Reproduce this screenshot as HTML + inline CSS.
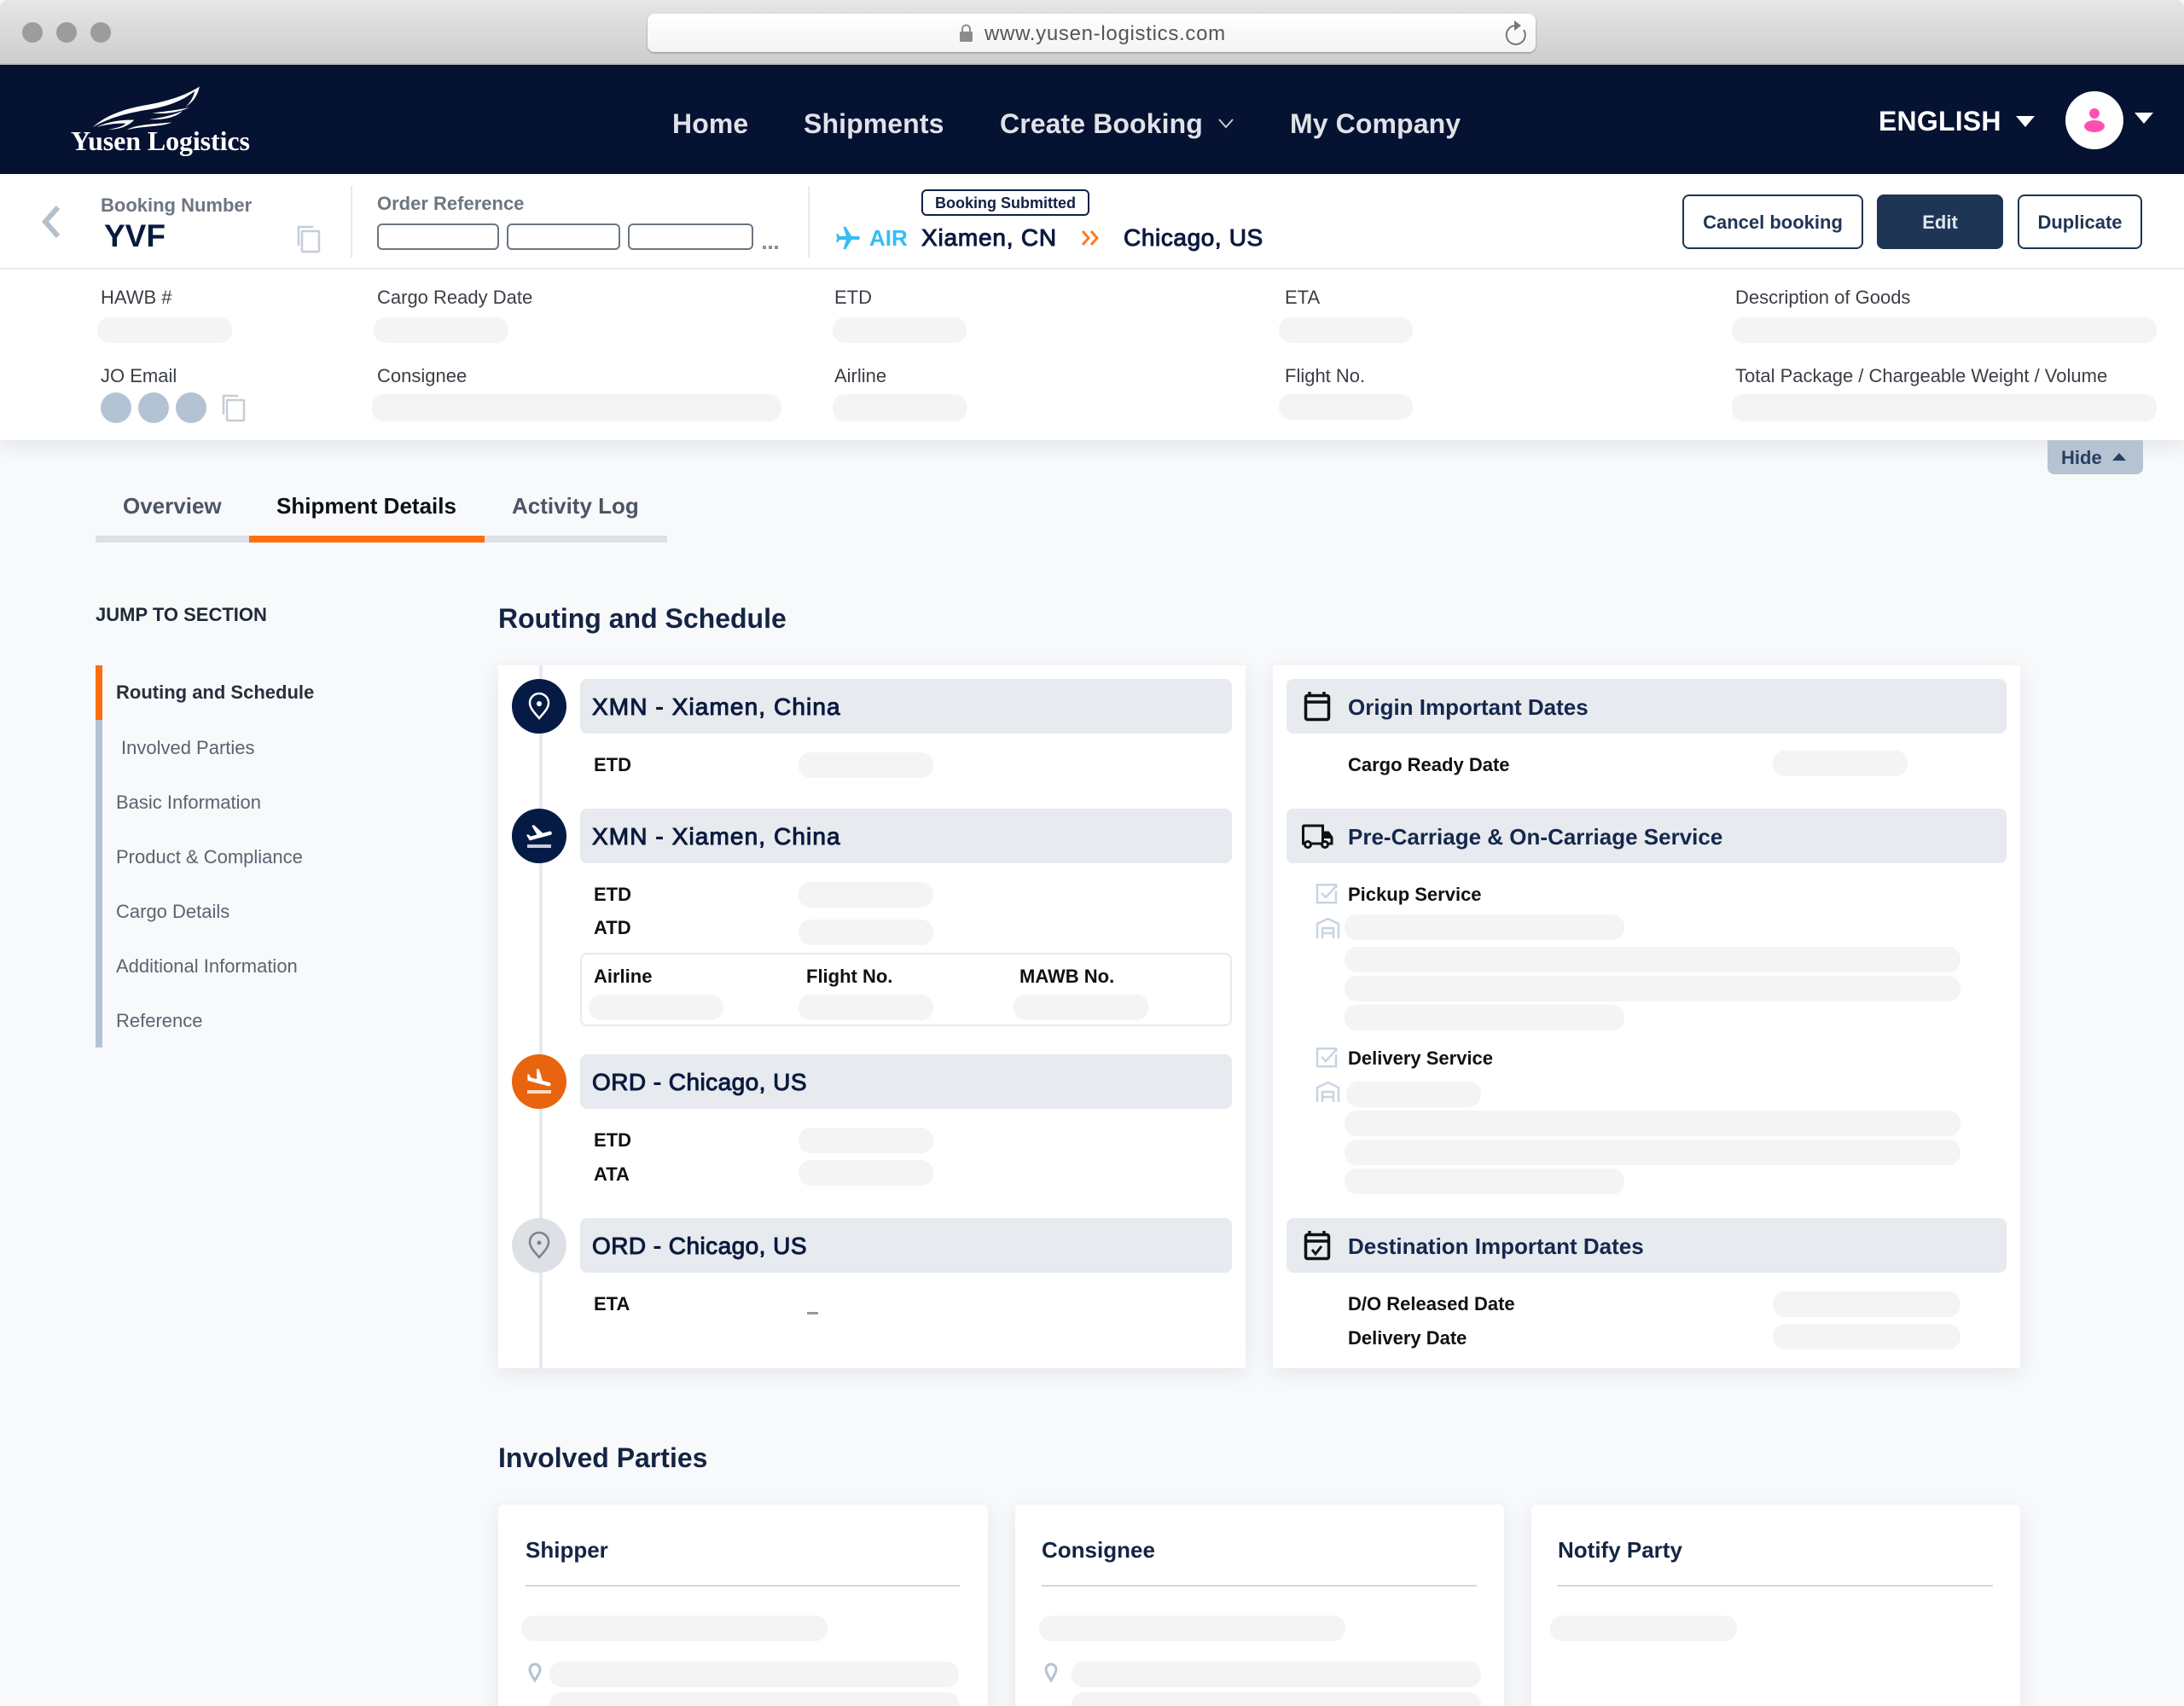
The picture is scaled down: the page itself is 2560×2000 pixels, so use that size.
<!DOCTYPE html>
<html lang="en"><head><meta charset="utf-8"><title>Yusen Logistics - Shipment Details</title>
<style>
html,body{margin:0;padding:0;width:2560px;height:2000px;overflow:hidden;background:#f7f9fb}
#p{position:relative;width:2560px;height:2000px;overflow:hidden;background:#f7f9fb;font-family:"Liberation Sans",Arial,sans-serif}
.a{position:absolute;box-sizing:border-box}
.t{position:absolute;white-space:nowrap;line-height:0;font-size:22px}
.b{font-weight:700}
.s{position:absolute;background:#f4f4f4;border-radius:14px;height:30px}
.h{position:absolute;background:#e7eaee;border-radius:8px;height:64px}
.ht{position:absolute;white-space:nowrap;line-height:0;font-size:28px;font-weight:400;-webkit-text-stroke:1px #0a1a3f;color:#0a1a3f;left:694px}
.md{font-weight:400;-webkit-text-stroke:1px #0a1a3f}
.rt{position:absolute;white-space:nowrap;line-height:0;font-size:26px;font-weight:700;color:#14284e;left:1580px}
.l{position:absolute;white-space:nowrap;line-height:0;font-size:22px;font-weight:700;color:#111}
.g{position:absolute;white-space:nowrap;line-height:0;font-size:22px;color:#3a3f45}
.n{position:absolute;white-space:nowrap;line-height:0;font-size:32px;font-weight:700;letter-spacing:.1px;color:#dfe3e8;top:145px}
.btn{position:absolute;top:228px;height:64px;border:2px solid #1e3553;border-radius:8px;background:#fff;color:#1e3553;font-size:22px;font-weight:700;line-height:61px;text-align:center;box-sizing:border-box}
.m{position:absolute;white-space:nowrap;line-height:0;font-size:22px;color:#5a6470;left:136px}
.card{position:absolute;background:#fff;box-shadow:0 6px 24px rgba(30,45,70,.09)}
.box{position:absolute;top:262px;height:31px;border:2px solid #6b7680;border-radius:6px;box-sizing:border-box;background:#fff}
</style></head>
<body>
<div id="p">
<!-- browser chrome -->
<div class="a" style="left:0;top:0;width:2560px;height:76px;background:linear-gradient(#e6e6e6,#cdcdcc);border-bottom:2px solid #b9b9b9;border-radius:8px 8px 0 0"></div>
<div class="a" style="left:759px;top:16px;width:1041px;height:45px;background:linear-gradient(#fff,#f4f4f4);border-radius:8px;box-shadow:0 1px 2px rgba(0,0,0,.35)"></div>
<div class="t" style="left:1154px;top:40px;font-size:24px;letter-spacing:.7px;color:#555">www.yusen-logistics.com</div>

<!-- nav -->
<div class="a" style="left:0;top:76px;width:2560px;height:128px;background:#051231"></div>
<div class="t" style="left:83px;top:165px;font-family:'Liberation Serif',serif;font-weight:700;font-size:32px;letter-spacing:-.1px;color:#fff">Yusen Logistics</div>
<div class="n" style="left:788px">Home</div>
<div class="n" style="left:942px">Shipments</div>
<div class="n" style="left:1172px">Create Booking</div>
<div class="n" style="left:1512px">My Company</div>
<div class="t b" style="left:2202px;top:142px;font-size:32px;letter-spacing:.2px;color:#fff">ENGLISH</div>

<!-- sub header -->
<div class="a" style="left:0;top:204px;width:2560px;height:312px;background:#fff;box-shadow:0 6px 22px rgba(30,45,70,.1)"></div>
<div class="a" style="left:0;top:314px;width:2560px;height:2px;background:#e9ecef"></div>
<div class="t b" style="left:118px;top:241px;color:#6d7680">Booking Number</div>
<div class="t b" style="left:122px;top:277px;font-size:37px;color:#0a1a3f">YVF</div>
<div class="a" style="left:411px;top:218px;width:2px;height:84px;background:#e8eaed"></div>
<div class="a" style="left:947px;top:218px;width:2px;height:84px;background:#e8eaed"></div>
<div class="t b" style="left:442px;top:239px;color:#6d7680">Order Reference</div>
<div class="box" style="left:442px;width:143px"></div>
<div class="box" style="left:594px;width:133px"></div>
<div class="box" style="left:736px;width:147px"></div>
<div class="a" style="left:1080px;top:222px;width:197px;height:31px;border:2px solid #0f2145;border-radius:6px"></div>
<div class="t b" style="left:1096px;top:238px;font-size:18px;color:#0f2145">Booking Submitted</div>
<div class="t b" style="left:1019px;top:279px;font-size:26px;color:#35bdf2">AIR</div>
<div class="t md" style="left:1080px;top:279px;font-size:28px;letter-spacing:.8px;color:#0a1a3f">Xiamen, CN</div>
<div class="t md" style="left:1317px;top:279px;font-size:28px;letter-spacing:.6px;color:#0a1a3f">Chicago, US</div>
<div class="btn" style="left:1972px;width:212px">Cancel booking</div>
<div class="btn" style="left:2200px;width:148px;background:#1f3555;border-color:#1f3555;color:#dfe5ee">Edit</div>
<div class="btn" style="left:2365px;width:146px">Duplicate</div>

<!-- details -->
<div class="g" style="left:118px;top:349px">HAWB #</div>
<div class="g" style="left:442px;top:349px">Cargo Ready Date</div>
<div class="g" style="left:978px;top:349px">ETD</div>
<div class="g" style="left:1506px;top:349px">ETA</div>
<div class="g" style="left:2034px;top:349px">Description of Goods</div>
<div class="s" style="left:114px;top:372px;width:158px"></div>
<div class="s" style="left:438px;top:372px;width:158px"></div>
<div class="s" style="left:976px;top:372px;width:157px"></div>
<div class="s" style="left:1499px;top:372px;width:157px"></div>
<div class="s" style="left:2030px;top:372px;width:498px"></div>
<div class="g" style="left:118px;top:441px">JO Email</div>
<div class="g" style="left:442px;top:441px">Consignee</div>
<div class="g" style="left:978px;top:441px">Airline</div>
<div class="g" style="left:1506px;top:441px">Flight No.</div>
<div class="g" style="left:2034px;top:441px">Total Package / Chargeable Weight / Volume</div>
<div class="s" style="left:436px;top:462px;width:480px;height:32px"></div>
<div class="s" style="left:976px;top:462px;width:157px;height:32px"></div>
<div class="s" style="left:1499px;top:462px;width:157px"></div>
<div class="s" style="left:2030px;top:462px;width:498px;height:32px"></div>
<div class="a" style="left:2400px;top:516px;width:112px;height:40px;background:#b5c3d2;border-radius:0 0 8px 8px"></div>
<div class="t b" style="left:2416px;top:537px;color:#27405f">Hide</div>

<!-- tabs -->
<div class="t b" style="left:144px;top:593px;font-size:26px;color:#4b5563">Overview</div>
<div class="t b" style="left:324px;top:593px;font-size:26px;color:#0c0f14">Shipment Details</div>
<div class="t b" style="left:600px;top:593px;font-size:26px;color:#4b5563">Activity Log</div>
<div class="a" style="left:112px;top:628px;width:670px;height:8px;background:#dde0e4"></div>
<div class="a" style="left:292px;top:628px;width:276px;height:8px;background:#ff6d10"></div>

<!-- sidebar -->
<div class="t b" style="left:112px;top:721px;color:#1f2a37">JUMP TO SECTION</div>
<div class="a" style="left:112px;top:780px;width:8px;height:448px;background:#b3c3d3"></div>
<div class="a" style="left:112px;top:780px;width:8px;height:64px;background:#ff6d10"></div>
<div class="m b" style="top:812px;color:#27303b">Routing and Schedule</div>
<div class="m" style="left:142px;top:877px">Involved Parties</div>
<div class="m" style="top:941px">Basic Information</div>
<div class="m" style="top:1005px">Product &amp; Compliance</div>
<div class="m" style="top:1069px">Cargo Details</div>
<div class="m" style="top:1133px">Additional Information</div>
<div class="m" style="top:1197px">Reference</div>

<div class="t b" style="left:584px;top:725px;font-size:32px;color:#142543">Routing and Schedule</div>

<!-- left card -->
<div class="card" style="left:584px;top:780px;width:876px;height:824px"></div>
<div class="a" style="left:632px;top:780px;width:4px;height:824px;background:#e6e9ee"></div>
<div class="h" style="left:680px;top:796px;width:764px"></div>
<div class="h" style="left:680px;top:948px;width:764px"></div>
<div class="h" style="left:680px;top:1236px;width:764px"></div>
<div class="h" style="left:680px;top:1428px;width:764px"></div>
<div class="ht" style="top:829px;letter-spacing:1.1px">XMN - Xiamen, China</div>
<div class="ht" style="top:981px;letter-spacing:1.1px">XMN - Xiamen, China</div>
<div class="ht" style="top:1269px;letter-spacing:.45px">ORD - Chicago, US</div>
<div class="ht" style="top:1461px;letter-spacing:.45px">ORD - Chicago, US</div>
<div class="l" style="left:696px;top:897px">ETD</div>
<div class="s" style="left:936px;top:882px;width:158px"></div>
<div class="l" style="left:696px;top:1049px">ETD</div>
<div class="s" style="left:936px;top:1034px;width:158px"></div>
<div class="l" style="left:696px;top:1088px">ATD</div>
<div class="s" style="left:936px;top:1078px;width:158px"></div>
<div class="a" style="left:680px;top:1117px;width:764px;height:86px;border:2px solid #e8eaed;border-radius:8px"></div>
<div class="l" style="left:696px;top:1145px">Airline</div>
<div class="l" style="left:945px;top:1145px">Flight No.</div>
<div class="l" style="left:1195px;top:1145px">MAWB No.</div>
<div class="s" style="left:690px;top:1166px;width:158px"></div>
<div class="s" style="left:936px;top:1166px;width:158px"></div>
<div class="s" style="left:1188px;top:1166px;width:158px"></div>
<div class="l" style="left:696px;top:1337px">ETD</div>
<div class="s" style="left:936px;top:1322px;width:158px"></div>
<div class="l" style="left:696px;top:1377px">ATA</div>
<div class="s" style="left:936px;top:1360px;width:158px"></div>
<div class="l" style="left:696px;top:1529px">ETA</div>
<div class="a" style="left:946px;top:1538px;width:13px;height:3px;background:#999"></div>

<!-- right card -->
<div class="card" style="left:1492px;top:780px;width:876px;height:824px"></div>
<div class="h" style="left:1508px;top:796px;width:844px"></div>
<div class="h" style="left:1508px;top:948px;width:844px"></div>
<div class="h" style="left:1508px;top:1428px;width:844px"></div>
<div class="rt" style="top:829px">Origin Important Dates</div>
<div class="rt" style="top:981px">Pre-Carriage &amp; On-Carriage Service</div>
<div class="rt" style="top:1461px">Destination Important Dates</div>
<div class="l" style="left:1580px;top:897px">Cargo Ready Date</div>
<div class="s" style="left:2078px;top:880px;width:158px"></div>
<div class="l" style="left:1580px;top:1049px">Pickup Service</div>
<div class="s" style="left:1576px;top:1072px;width:328px"></div>
<div class="s" style="left:1576px;top:1110px;width:722px"></div>
<div class="s" style="left:1576px;top:1144px;width:722px"></div>
<div class="s" style="left:1576px;top:1178px;width:328px"></div>
<div class="l" style="left:1580px;top:1241px">Delivery Service</div>
<div class="s" style="left:1578px;top:1268px;width:158px"></div>
<div class="s" style="left:1576px;top:1302px;width:722px"></div>
<div class="s" style="left:1576px;top:1336px;width:722px"></div>
<div class="s" style="left:1576px;top:1370px;width:328px"></div>
<div class="l" style="left:1580px;top:1529px">D/O Released Date</div>
<div class="s" style="left:2078px;top:1514px;width:220px"></div>
<div class="l" style="left:1580px;top:1569px">Delivery Date</div>
<div class="s" style="left:2078px;top:1552px;width:220px"></div>

<!-- involved parties -->
<div class="t b" style="left:584px;top:1709px;font-size:32px;color:#142543">Involved Parties</div>
<div class="card" style="left:584px;top:1764px;width:574px;height:260px;border-radius:6px"></div>
<div class="card" style="left:1190px;top:1764px;width:573px;height:260px;border-radius:6px"></div>
<div class="card" style="left:1795px;top:1764px;width:573px;height:260px;border-radius:6px"></div>
<div class="t b" style="left:616px;top:1817px;font-size:26px;color:#142543">Shipper</div>
<div class="t b" style="left:1221px;top:1817px;font-size:26px;color:#142543">Consignee</div>
<div class="t b" style="left:1826px;top:1817px;font-size:26px;color:#142543">Notify Party</div>
<div class="a" style="left:616px;top:1858px;width:509px;height:2px;background:#d0d5da"></div>
<div class="a" style="left:1221px;top:1858px;width:510px;height:2px;background:#d0d5da"></div>
<div class="a" style="left:1826px;top:1858px;width:510px;height:2px;background:#d0d5da"></div>
<div class="s" style="left:611px;top:1894px;width:359px"></div>
<div class="s" style="left:1218px;top:1894px;width:359px"></div>
<div class="s" style="left:1817px;top:1894px;width:219px"></div>
<div class="s" style="left:644px;top:1948px;width:480px"></div>
<div class="s" style="left:644px;top:1984px;width:480px"></div>
<div class="s" style="left:1256px;top:1948px;width:480px"></div>
<div class="s" style="left:1256px;top:1984px;width:480px"></div>

<!-- all icons drawn in page coordinates -->
<svg class="a" style="left:0;top:0" width="2560" height="2000" viewBox="0 0 2560 2000" fill="none">
  <!-- window dots -->
  <circle cx="38" cy="38" r="12" fill="#9c9c9c"/><circle cx="78" cy="38" r="12" fill="#9c9c9c"/><circle cx="118" cy="38" r="12" fill="#9c9c9c"/>
  <!-- lock -->
  <rect x="1125" y="37" width="15" height="12" rx="1.5" fill="#8c8c8c"/>
  <path d="M1128 38v-4a4.500 4.500 0 0 1 9 0v4" stroke="#8c8c8c" stroke-width="2"/>
  <!-- reload -->
  <path d="M1776 30A11 11 0 1 0 1786 35" stroke="#777" stroke-width="2"/>
  <path d="M1775 24l8 6-8 6z" fill="#777"/>
  <!-- logo wing -->
  <g transform="translate(60 90) scale(.3333)" fill="#fff">
    <path d="M522 34C470 68 400 88 330 100C250 114 190 138 145 178C195 148 262 128 340 116C420 102 480 78 522 34Z"/>
    <path d="M522 34C515 62 505 85 470 108C490 92 500 70 505 50Z"/>
    <path d="M487 108C445 126 400 132 355 128C395 122 440 118 487 108Z"/>
    <path d="M462 120C440 142 400 152 345 150C390 144 430 134 462 120Z"/>
    <path d="M424 160C390 177 320 172 266 187C300 166 370 166 424 160Z"/>
    <path d="M292 152C240 150 195 160 160 177C200 166 245 162 262 165C250 176 225 182 200 185C235 187 270 175 292 152Z"/>
  </g>
  <!-- nav chevron & triangles -->
  <path d="M1429 140l8 9 8-9" stroke="#c7ccd3" stroke-width="2"/>
  <path d="M2363 136h22l-11 13z" fill="#fff"/>
  <circle cx="2455" cy="141" r="34" fill="#fff"/>
  <ellipse cx="2455" cy="133" rx="6" ry="6" fill="#ff4fb0"/>
  <ellipse cx="2455" cy="148" rx="12" ry="7" fill="#ff4fb0"/>
  <path d="M2502 132h22l-11 13z" fill="#fff"/>
  <!-- back -->
  <path d="M68 243L53 260l15 17" stroke="#b3bfca" stroke-width="6"/>
  <!-- copy icons -->
  <g stroke="#c5cdd6" stroke-width="2.500">
    <path d="M350 288v-22h17"/><rect x="354" y="271" width="20" height="24" rx="1"/>
    <path d="M262 486v-22h17"/><rect x="266" y="469" width="20" height="24" rx="1"/>
  </g>
  <!-- order ref dots -->
  <g fill="#8a929b"><rect x="894" y="288" width="4" height="4"/><rect x="901" y="288" width="4" height="4"/><rect x="908" y="288" width="4" height="4"/></g>
  <!-- plane -->
  <path transform="translate(994 279) rotate(90) scale(1.400) translate(-11.500 -12)" d="M21 16v-2l-8-5V3.500c0-.83-.67-1.500-1.500-1.500S10 2.670 10 3.500V9l-8 5v2l8-2.500V19l-2 1.500V22l3.500-1 3.500 1v-1.500L13 19v-5.500l8 2.500z" fill="#35bdf2"/>
  <!-- route arrows -->
  <path d="M1269 271l7 8-7 8M1279 271l7 8-7 8" stroke="#ff7a1f" stroke-width="3"/>
  <!-- email dots -->
  <circle cx="136" cy="478" r="18" fill="#b3c3d3"/><circle cx="180" cy="478" r="18" fill="#b3c3d3"/><circle cx="224" cy="478" r="18" fill="#b3c3d3"/>
  <!-- hide triangle -->
  <path d="M2476 540l8-9 8 9z" fill="#27405f"/>
  <!-- timeline circles -->
  <circle cx="632" cy="828" r="32" fill="#051a44"/>
  <path d="M632 842c-6-7-11-12-11-18a11 11 0 0 1 22 0c0 6-5 11-11 18z" stroke="#fff" stroke-width="2.500"/><circle cx="632" cy="825" r="3" fill="#fff"/>
  <circle cx="632" cy="980" r="32" fill="#051a44"/>
  <path transform="translate(614.300 962) scale(1.470)" d="M22.070 9.640c-.21-.8-1.040-1.280-1.840-1.060L14.920 10 8 3.570l-1.910.51 4.140 7.170-4.970 1.330-1.970-1.540-1.450.39 1.820 3.160.77 1.330 1.600-.43 5.310-1.420 4.350-1.160L21 11.490c.81-.23 1.280-1.050 1.070-1.850z" fill="#fff"/>
  <rect x="618" y="990" width="28" height="4" fill="#c8cdd6"/>
  <circle cx="632" cy="1268" r="32" fill="#e8640f"/>
  <path transform="translate(614.300 1250) scale(1.470)" d="M9.680 13.270l4.350 1.160 5.310 1.420c.8.210 1.620-.26 1.840-1.060.21-.8-.26-1.620-1.060-1.840l-5.310-1.420-2.760-9.020L10.120 2v8.280L5.150 8.950l-.93-2.320-1.450-.39v5.170l1.600.43 5.310 1.430z" fill="#fff"/>
  <rect x="618" y="1278" width="28" height="4" fill="#ffd9c2"/>
  <circle cx="632" cy="1460" r="32" fill="#dde1e6"/>
  <path d="M632 1474c-6-7-11-12-11-18a11 11 0 0 1 22 0c0 6-5 11-11 18z" stroke="#7a838c" stroke-width="2.500"/><circle cx="632" cy="1457" r="2.500" fill="#7a838c"/>
  <!-- calendar -->
  <g stroke="#111" stroke-width="3.500">
    <rect x="1530.500" y="815.500" width="27" height="28" rx="2"/><path d="M1530 823h28M1535 811v5M1552 811v5"/>
    <rect x="1530.500" y="1447.500" width="27" height="28" rx="2"/><path d="M1530 1455h28M1535 1443v5M1552 1443v5"/>
    <path d="M1538 1465l4 5 7-9" stroke-width="3"/>
  </g>
  <!-- truck -->
  <g stroke="#111" stroke-width="3">
    <path d="M1529 989h-1.500v-20a1 1 0 0 1 1-1h22v21h-14M1551 976h6l4 6v7h-4"/>
    <circle cx="1533" cy="990" r="3.500" fill="#e7eaee"/><circle cx="1553" cy="990" r="3.500" fill="#e7eaee"/>
  </g>
  <path d="M1551 977h6l4 6h-10z" fill="#111"/>
  <!-- checkboxes -->
  <g stroke="#c8d4e2" stroke-width="2.500">
    <path d="M1566 1041v-3.800h-22v21h22v-14"/><path d="M1549 1047l5 5 13-14"/>
    <path d="M1566 1233v-3.800h-22v21h22v-14"/><path d="M1549 1239l5 5 13-14"/>
  </g>
  <!-- warehouse -->
  <g stroke="#c8d4e2" stroke-width="2.500">
    <path d="M1544 1100v-17l12.500-6 12.500 6v17"/><path d="M1550 1100v-12h13v12M1550 1094h13"/>
    <path d="M1544 1292v-17l12.500-6 12.500 6v17"/><path d="M1550 1292v-12h13v12M1550 1286h13"/>
  </g>
  <!-- party pins -->
  <g stroke="#b3c3d3" stroke-width="3">
    <path d="M627 1970c-3-5-6-9-6-13a6 6 0 0 1 12 0c0 4-3 8-6 13z"/>
    <path d="M1232 1970c-3-5-6-9-6-13a6 6 0 0 1 12 0c0 4-3 8-6 13z"/>
  </g>
</svg>
</div>
</body></html>
